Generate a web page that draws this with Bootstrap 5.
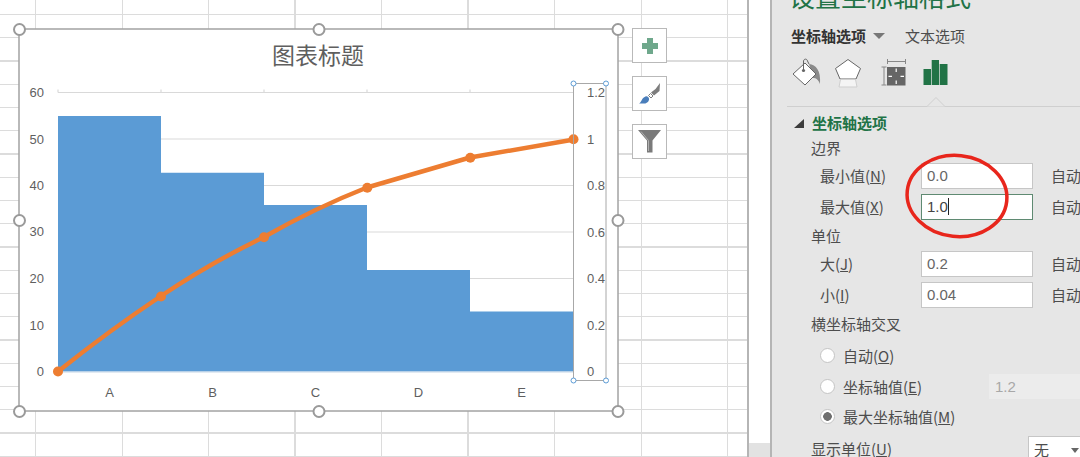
<!DOCTYPE html>
<html lang="zh-CN">

<head>
    <meta charset="UTF-8" />
    <meta name="viewport" content="width=device-width, initial-scale=1" />
    <title>设置坐标轴格式</title>
    <link href="https://cdn.jsdelivr.net/npm/bootstrap@5.3.0/dist/css/bootstrap.min.css" rel="stylesheet" />
    <style>
        body {
            width: 1080px;
            height: 457px;
            overflow: hidden;
            background: #fff;
            font-family: "Noto Sans CJK SC", "Liberation Sans", sans-serif;
            font-size: 15px;
            color: #4d4d4d;
        }

        /* worksheet */
        .sheet-area {
            position: relative;
            width: 749px;
            height: 457px;
            flex: none;
            border-right: 2px solid #b5b5b5;
            background-color: #fff;
            background-image:
                repeating-linear-gradient(to right, #dcdcdc 35px, #dcdcdc 36px, transparent 36px, transparent 121.5px),
                repeating-linear-gradient(to bottom, #dcdcdc 14px, #dcdcdc 15px, transparent 15px, transparent 37.25px);
        }

        .chart-canvas {
            position: absolute;
            left: 0;
            top: 0;
        }

        .chart-canvas text {
            font-family: "Liberation Sans", "Noto Sans CJK SC", sans-serif;
            font-size: 13px;
            fill: #5f5f5f;
        }

        .chart-canvas .chart-title {
            font-family: "Noto Sans CJK SC", sans-serif;
            font-size: 23px;
        }

        .chart-tools {
            position: absolute;
            left: 632px;
            top: 28px;
        }

        .tool-btn {
            width: 35px;
            height: 35px;
            background: #fff;
            border: 1px solid #b9b9b9;
        }

        .tool-gap {
            gap: 13px;
        }

        /* scrollbar lane between sheet and pane */
        .scroll-lane {
            width: 23px;
            flex: none;
            background: #fff;
            border-right: 2px solid #b5b5b5;
        }

        .scroll-end {
            height: 14px;
            background: #e2e2e2;
        }

        /* format pane */
        .format-pane {
            position: relative;
            flex: 1;
            min-width: 0;
            height: 457px;
            overflow: hidden;
            background: #e6e6e6;
            padding-left: 17px;
            white-space: nowrap;
        }

        .pane-title {
            height: 10px;
            font-size: 26px;
            line-height: 26px;
            margin-top: -17px;
            margin-bottom: 17px;
            color: #217346;
            width: 300px;
        }

        .tab-row {
            height: 20px;
            margin-top: 33px;
            padding-left: 2px;
            line-height: 20px;
        }

        .tab-on {
            font-weight: 700;
            color: #333;
        }

        .tab-arrow {
            width: 0;
            height: 0;
            margin: 0 20px 0 7px;
            border-left: 6px solid transparent;
            border-right: 6px solid transparent;
            border-top: 6px solid #777;
        }

        .icon-row {
            height: 30px;
            margin-top: 12px;
            padding-left: 3px;
        }

        .icon-shape {
            margin-left: 12px;
        }

        .icon-size {
            margin-left: 19px;
        }

        .icon-axis {
            margin-left: 14px;
        }

        .tab-rule {
            position: relative;
            height: 1px;
            margin: 18px 0 0 -2px;
            width: 320px;
            background: #cfcfcf;
        }

        .tab-notch {
            position: absolute;
            left: 137px;
            top: -9px;
        }

        .group-head {
            height: 20px;
            margin-top: 6px;
            padding-left: 5px;
            line-height: 20px;
            font-weight: 700;
            color: #217346;
        }

        .group-arrow {
            width: 0;
            height: 0;
            margin-right: 8px;
            border-left: 10px solid transparent;
            border-bottom: 9px solid #3c3c3c;
        }

        .sub-head {
            height: 20px;
            padding-left: 22px;
            line-height: 20px;
        }

        .field-row {
            height: 26px;
            padding-left: 31px;
            line-height: 26px;
        }

        .field-label {
            width: 101px;
            flex: none;
        }

        .field-box {
            width: 112px;
            height: 26px;
            flex: none;
            padding: 0 5px;
            line-height: 24px;
            font-family: "Liberation Sans", sans-serif;
            font-size: 15px;
            color: #666;
            background: #fff;
            border: 1px solid #c6c6c6;
            border-radius: 0;
        }

        .field-box.is-active {
            border-color: #5f8a72;
            color: #444;
        }

        .text-caret {
            display: inline-block;
            width: 1px;
            height: 17px;
            background: #222;
            vertical-align: -3px;
        }

        .auto-tag {
            margin-left: 18px;
        }

        .radio-row {
            height: 25px;
            padding-left: 31px;
            line-height: 25px;
        }

        .radio-row .form-check-input {
            width: 15px;
            height: 15px;
            margin: 0 8px 0 0;
            flex: none;
            border: 1px solid #c4c4c4;
            box-shadow: none;
        }

        .radio-row .form-check-input:checked {
            background-color: #fff;
            border-color: #c4c4c4;
            background-image: radial-gradient(circle, #6e6e6e 0, #6e6e6e 4px, transparent 4.6px);
        }

        .disabled-box {
            position: absolute;
            left: 217px;
            top: 374px;
            width: 91px;
            height: 25px;
            padding: 0 6px;
            line-height: 25px;
            font-family: "Liberation Sans", sans-serif;
            color: #a8a8a8;
            background: #ececec;
        }

        .unit-label {
            position: absolute;
            left: 39px;
            top: 441px;
            height: 16px;
            line-height: 16px;
        }

        .unit-select {
            position: absolute;
            left: 256px;
            top: 436px;
            width: 60px;
            height: 21px;
            padding: 5px 0 0 5px;
            line-height: 16px;
            background: #fff;
            border: 1px solid #c6c6c6;
            border-bottom: 0;
        }

        .unit-caret {
            position: absolute;
            left: 42px;
            top: 11px;
            border-left: 4px solid transparent;
            border-right: 4px solid transparent;
            border-top: 5px solid #666;
        }

        .red-ring {
            position: absolute;
            left: 129px;
            top: 149px;
        }
    </style>
</head>

<body>

    <div class="d-flex">

        <!-- Hoja de cálculo con el gráfico -->
        <div class="sheet-area">
            <svg class="chart-canvas" width="747" height="457" viewBox="0 0 747 457">
                <rect x="19" y="29" width="599" height="382" fill="#fff" stroke="#a3a3a3" stroke-width="1.5" />

                <!-- gridlines -->
                <g stroke="#d9d9d9" stroke-width="1.2">
                    <path d="M58 92.5H574M58 139H574M58 185.5H574M58 232H574M58 278.5H574M58 325H574" />
                    <path d="M58 89.5V92.5M161 89.5V92.5M264 89.5V92.5M367 89.5V92.5M470 89.5V92.5" />
                </g>

                <!-- bars -->
                <path fill="#5b9bd5"
                    d="M58 371.5V116H161V172.8H264V205H367V270H470V311.5H574V371.5Z" />
                <path d="M58 372H574" stroke="#c5d5e6" stroke-width="1" />

                <!-- line -->
                <path fill="none" stroke="#ed7d31" stroke-width="4.5" stroke-linejoin="round"
                    d="M58 371.5Q110 330 161 296T264 237Q315 208 367 187.5L470 157.5L574 139.5" />
                <g fill="#ed7d31">
                    <circle cx="58" cy="371.5" r="5" />
                    <circle cx="161" cy="296.5" r="5" />
                    <circle cx="264" cy="237.3" r="5" />
                    <circle cx="367.3" cy="187.7" r="5" />
                    <circle cx="470.3" cy="157.7" r="5" />
                    <circle cx="573.5" cy="139.3" r="5" />
                </g>

                <text class="chart-title" x="318" y="64" text-anchor="middle">图表标题</text>

                <g text-anchor="end">
                    <text x="44" y="97">60</text>
                    <text x="44" y="144">50</text>
                    <text x="44" y="190">40</text>
                    <text x="44" y="236">30</text>
                    <text x="44" y="283">20</text>
                    <text x="44" y="330">10</text>
                    <text x="44" y="376">0</text>
                </g>

                <g text-anchor="middle">
                    <text x="109.5" y="397">A</text>
                    <text x="212.5" y="397">B</text>
                    <text x="315.5" y="397">C</text>
                    <text x="418.5" y="397">D</text>
                    <text x="521.5" y="397">E</text>
                </g>

                <!-- selected secondary axis -->
                <rect x="573.5" y="83.5" width="32.5" height="297" fill="none" stroke="#a8a8a8" stroke-width="1" />
                <text x="587" y="97">1.2</text>
                <text x="587" y="144">1</text>
                <text x="587" y="190">0.8</text>
                <text x="587" y="237">0.6</text>
                <text x="587" y="283">0.4</text>
                <text x="587" y="330">0.2</text>
                <text x="587" y="376">0</text>
                <g fill="#fff" stroke="#5b9bd5" stroke-width="1">
                    <circle cx="573.5" cy="83.5" r="2.5" />
                    <circle cx="606" cy="83.5" r="2.5" />
                    <circle cx="573.5" cy="380.5" r="2.5" />
                    <circle cx="606" cy="380.5" r="2.5" />
                </g>

                <!-- chart handles -->
                <g fill="#fff" stroke="#9a9a9a" stroke-width="2">
                    <circle cx="19.5" cy="29.5" r="5.5" />
                    <circle cx="319" cy="29.5" r="5.5" />
                    <circle cx="618" cy="29.5" r="5.5" />
                    <circle cx="19.5" cy="220.5" r="5.5" />
                    <circle cx="618" cy="220.5" r="5.5" />
                    <circle cx="19.5" cy="411.5" r="5.5" />
                    <circle cx="319" cy="411.5" r="5.5" />
                    <circle cx="618" cy="411.5" r="5.5" />
                </g>
            </svg>

            <!-- Botones del gráfico -->
            <div class="chart-tools d-flex flex-column tool-gap">
                <div class="tool-btn d-flex align-items-center justify-content-center">
                    <svg width="18" height="18" viewBox="0 0 18 18">
                        <path fill="#6fa88c" d="M6 1H12V6H17V12H12V17H6V12H1V6H6Z" />
                    </svg>
                </div>
                <div class="tool-btn d-flex align-items-center justify-content-center">
                    <svg width="24" height="24" viewBox="0 0 24 24">
                        <path fill="#7d7d7d" d="M22 1L21.5 9L16 13.5L13 10.5L17.5 7Z" />
                        <path fill="#fff" stroke="#7d7d7d" stroke-width="1" d="M12.5 11.5L15 14L13 16L10.5 13.5Z" />
                        <path fill="#4a7ebb" d="M1 21.5C3.5 20.5 3.5 16 7.5 14.5C9 14 10.5 15 11 16.5C11.5 19 9 21.5 6.5 21.5Z" />
                    </svg>
                </div>
                <div class="tool-btn d-flex align-items-center justify-content-center">
                    <svg width="25" height="25" viewBox="0 0 25 25">
                        <path fill="#7a7a7a" d="M1 1H24L15.5 11.5V23.5H10V11.5Z" />
                        <path fill="none" stroke="#b0b0b0" stroke-width="1" d="M4 2.5L11.5 11.5V22" />
                    </svg>
                </div>
            </div>
        </div>

        <div class="scroll-lane d-flex flex-column justify-content-end">
            <div class="scroll-end"></div>
        </div>

        <!-- Panel de formato -->
        <div class="format-pane">
            <div class="pane-title">设置坐标轴格式</div>

            <div class="tab-row d-flex align-items-center">
                <span class="tab-on">坐标轴选项</span>
                <span class="tab-arrow"></span>
                <span>文本选项</span>
            </div>

            <div class="icon-row d-flex align-items-center">
                <!-- fill -->
                <svg width="30" height="30" viewBox="0 0 30 30">
                    <path fill="#8a8a8a" d="M17 6C24 7 29 12 28 26C26 21 24 20 21 20Z" />
                    <path fill="#fff" stroke="#666" stroke-width="1" d="M1 16L13 5L24 16L13 27Z" />
                    <path fill="none" stroke="#666" stroke-width="1" d="M11.5 12V3C12 0.5 15 0.5 15.5 3L17 6" />
                    <circle cx="11.5" cy="12.5" r="1.6" fill="#666" />
                </svg>
                <!-- effects -->
                <svg class="icon-shape" width="28" height="30" viewBox="0 0 28 30">
                    <path fill="#fff" stroke="#666" stroke-width="1" d="M14 1.5L26.5 10.5L22 21H6L1.5 10.5Z" />
                    <path fill="#f4f4f4" stroke="#cfcfcf" stroke-width="1" d="M6.5 21.5H21.5L23 29H5Z" />
                </svg>
                <!-- size -->
                <svg class="icon-size" width="28" height="30" viewBox="0 0 28 30">
                    <path fill="none" stroke="#888" stroke-width="1" d="M7 3.5H25M6.5 1V6M24.5 1V6M3 9V27M0.5 9H5.5M0.5 27H5.5" />
                    <rect x="6" y="9" width="18.5" height="18.5" fill="#666" />
                    <path fill="none" stroke="#fff" stroke-width="1.2" d="M15.2 10.5V14M15.2 22.5V26M7.5 18.3H11M19.5 18.3H23" />
                </svg>
                <!-- axis options -->
                <svg class="icon-axis" width="25" height="30" viewBox="0 0 25 30">
                    <path fill="#217346" d="M0.5 11H8V27H0.5ZM8.7 2H16V27H8.7ZM16.7 6H24.5V27H16.7Z" />
                </svg>
            </div>

            <div class="tab-rule">
                <svg class="tab-notch" width="24" height="10" viewBox="0 0 24 10">
                    <path fill="#e6e6e6" stroke="#cfcfcf" stroke-width="1" d="M0 9.5H3L12 0.5L21 9.5H24" />
                </svg>
            </div>

            <div class="group-head d-flex align-items-center">
                <span class="group-arrow"></span>
                <span>坐标轴选项</span>
            </div>

            <div class="sub-head" style="margin-top:5px">边界</div>

            <div class="field-row d-flex" style="margin-top:5px">
                <span class="field-label">最小值(<u>N</u>)</span>
                <div class="field-box">0.0</div>
                <span class="auto-tag">自动</span>
            </div>
            <div class="field-row d-flex" style="margin-top:5px">
                <span class="field-label">最大值(<u>X</u>)</span>
                <div class="field-box is-active">1.0<span class="text-caret"></span></div>
                <span class="auto-tag">自动</span>
            </div>

            <div class="sub-head" style="margin-top:6px">单位</div>

            <div class="field-row d-flex" style="margin-top:5px">
                <span class="field-label">大(<u>J</u>)</span>
                <div class="field-box">0.2</div>
                <span class="auto-tag">自动</span>
            </div>
            <div class="field-row d-flex" style="margin-top:5px">
                <span class="field-label">小(<u>I</u>)</span>
                <div class="field-box">0.04</div>
                <span class="auto-tag">自动</span>
            </div>

            <div class="sub-head" style="margin-top:6px">横坐标轴交叉</div>

            <div class="radio-row d-flex align-items-center" style="margin-top:9px">
                <input class="form-check-input" type="radio" name="cross" />
                <span>自动(<u>O</u>)</span>
            </div>
            <div class="radio-row d-flex align-items-center" style="margin-top:6px">
                <input class="form-check-input" type="radio" name="cross" />
                <span>坐标轴值(<u>E</u>)</span>
            </div>
            <div class="radio-row d-flex align-items-center" style="margin-top:5px">
                <input class="form-check-input" type="radio" name="cross" checked />
                <span>最大坐标轴值(<u>M</u>)</span>
            </div>

            <div class="disabled-box">1.2</div>

            <div class="unit-label">显示单位(<u>U</u>)</div>
            <div class="unit-select">无<span class="unit-caret"></span></div>

            <!-- Círculo rojo de anotación -->
            <svg class="red-ring" width="112" height="96" viewBox="0 0 112 96">
                <ellipse cx="56" cy="47" rx="50" ry="40.5" fill="none" stroke="#e8261c" stroke-width="3.5"
                    transform="rotate(6 56 47)" />
            </svg>
        </div>

    </div>

    <script src="https://cdn.jsdelivr.net/npm/bootstrap@5.3.0/dist/js/bootstrap.bundle.min.js"></script>

</body>

</html>
